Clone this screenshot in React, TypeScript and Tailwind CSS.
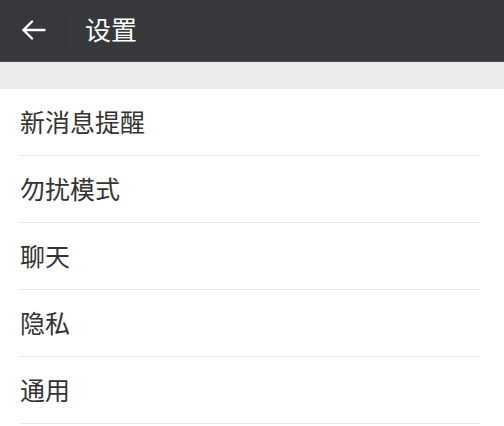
const items = ["新消息提醒", "勿扰模式", "聊天", "隐私", "通用"];

function BackArrow() {
  return (
    <svg width="24" height="20" viewBox="0 0 24 20" fill="none" stroke="white" strokeWidth="2.4" strokeLinecap="round" strokeLinejoin="round">
      <path d="M10 1.5 1.5 10 10 18.5" />
      <path d="M1.5 10H22.5" />
    </svg>
  );
}

export default function App() {
  return (
    <div
      className="w-[504px] h-[426px] overflow-hidden bg-white"
      style={{ fontFamily: '"Noto Sans CJK SC", "Noto Sans", sans-serif' }}
    >
      {/* Top bar */}
      <div className="flex h-[62px] items-center bg-[#37383c] border-b border-[#4a4b4f] pb-[3px]">
        <div className="flex w-[65px] items-center pl-[22px] pt-[2px]">
          <BackArrow />
        </div>
        <div className="h-[36px] w-px bg-[#303134]" />
        <h1 className="ml-[19px] text-[26px] leading-none text-white">设置</h1>
      </div>

      {/* Gray spacer */}
      <div className="h-[27px] bg-[#ebebeb]" />

      {/* List */}
      <ul>
        {items.map((item) => (
          <li key={item} className="pl-[20px] pr-[24px]">
            <div className="flex h-[67px] items-center border-b border-[#e6e6e6] text-[25px] text-[#333333]">
              {item}
            </div>
          </li>
        ))}
      </ul>
    </div>
  );
}
